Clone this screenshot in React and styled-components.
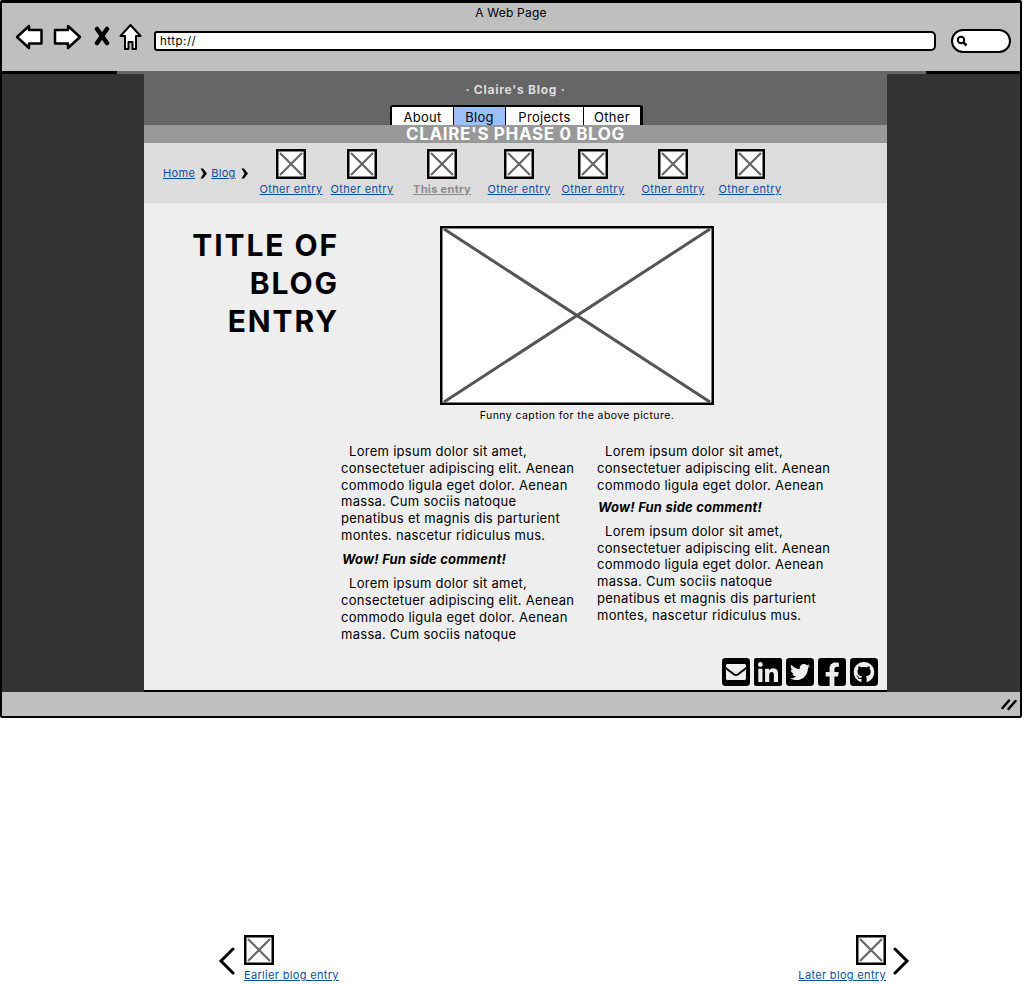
import React from 'react';
import styled, { createGlobalStyle } from 'styled-components';
import {
  FaEnvelopeSquare,
  FaLinkedin,
  FaTwitterSquare,
  FaFacebookSquare,
  FaGithubSquare,
} from 'react-icons/fa';

const GlobalStyle = createGlobalStyle`
  html, body {
    margin: 0;
    padding: 0;
    height: 985px;
    overflow: hidden;
    background: #ffffff;
    font-family: Inter, "Noto Sans", "Liberation Sans", sans-serif;
    color: #000000;
  }
`;

const Frame = styled.div`
  width: 1022px;
  height: 718px;
  box-sizing: border-box;
  border: 2px solid #000000;
  border-top-width: 3px;
  border-radius: 2px;
  display: flex;
  flex-direction: column;
`;

const Chrome = styled.header`
  height: 68px;
  background: #bfbfbf;
  display: flex;
  flex-direction: column;
  flex: none;
`;

const WindowTitle = styled.div`
  height: 20px;
  font-size: 12px;
  line-height: 20px;
  letter-spacing: 0.2px;
  text-align: center;
`;

const ToolRow = styled.div`
  display: flex;
  align-items: flex-start;
  height: 34px;
  padding-left: 13px;
`;

const NavIcon = styled.svg`
  flex: none;
  margin-right: ${(p) => p.$after}px;
  margin-top: ${(p) => p.$top}px;
`;

const AddressBar = styled.div`
  width: 782px;
  height: 20px;
  margin-top: 8px;
  box-sizing: border-box;
  border: 2px solid #000000;
  border-radius: 3px 5px 5px 3px;
  background: #ffffff;
  font-size: 11.5px;
  line-height: 16px;
  letter-spacing: 0.5px;
  padding-left: 4px;
  margin-right: 15px;
`;

const SearchPill = styled.div`
  width: 60px;
  height: 24px;
  margin-top: 6px;
  box-sizing: border-box;
  border: 2px solid #000000;
  border-radius: 12px;
  background: #ffffff;
  display: flex;
  align-items: center;
  padding-left: 3px;
`;

const Viewport = styled.div`
  flex: 1;
  min-height: 0;
  background: #333333;
  display: flex;
  flex-direction: column;
`;

const TopEdge = styled.div`
  height: 3px;
  flex: none;
  background: linear-gradient(90deg, #000 115px, #666 115px, #666 924px, #000 924px);
`;

const PageColumn = styled.main`
  width: 743px;
  margin-left: 142px;
  flex: 1;
  display: flex;
  flex-direction: column;
  min-height: 0;
`;

const SiteHeader = styled.div`
  height: 51px;
  background: #666666;
  display: flex;
  flex-direction: column;
  flex: none;
`;

const SiteName = styled.div`
  height: 31px;
  line-height: 31px;
  font-size: 12px;
  font-weight: 700;
  letter-spacing: 0.75px;
  color: #dddddd;
  text-align: center;
`;

const Tabs = styled.nav`
  display: flex;
  align-self: flex-start;
  height: 20px;
  margin-left: 246px;
  border-top: 2px solid #000000;
  border-left: 2px solid #000000;
  border-right: 3px solid #000000;
  border-radius: 3px 3px 0 0;
  box-sizing: border-box;
  overflow: hidden;
`;

const Tab = styled.div`
  width: ${(p) => p.$w}px;
  box-sizing: border-box;
  background: ${(p) => (p.$active ? '#9cc0f5' : '#ffffff')};
  font-size: 13px;
  line-height: 20px;
  letter-spacing: 0.3px;
  text-align: center;
  border-left: ${(p) => (p.$first ? 'none' : '1px solid #000')};
`;

const Band = styled.div`
  height: 18px;
  background: #999999;
  color: #ffffff;
  font-size: 17px;
  font-weight: 700;
  line-height: 18px;
  letter-spacing: 0.65px;
  text-align: center;
  overflow: hidden;
  flex: none;
`;

const CrumbBar = styled.div`
  height: 60px;
  background: #dcdcdc;
  display: flex;
  align-items: flex-start;
  padding-left: 19px;
  box-sizing: border-box;
  flex: none;
`;

const Crumbs = styled.div`
  display: flex;
  align-items: center;
  height: 60px;
  width: 96px;
  flex: none;
`;

const TextLink = styled.a`
  color: #0b4f9e;
  font-size: 11px;
  line-height: 14px;
  letter-spacing: 0.33px;
  text-decoration: underline;
  white-space: nowrap;
`;

const CrumbArrow = styled.svg`
  margin: 0 4px 0 5px;
  flex: none;
`;

const Entry = styled.div`
  width: ${(p) => p.$w}px;
  margin-left: ${(p) => p.$gap}px;
  padding-top: 6px;
  display: flex;
  flex-direction: column;
  align-items: center;
  flex: none;
`;

const Thumb = styled.svg`
  display: block;
  flex: none;
`;

const EntryLabel = styled(TextLink)`
  margin-top: 3px;
  font-weight: ${(p) => (p.$current ? 700 : 400)};
  color: ${(p) => (p.$current ? '#8a8a8a' : '#0b4f9e')};
`;

const Content = styled.div`
  flex: 1;
  min-height: 0;
  background: #eeeeee;
  border-bottom: 2px solid #000000;
  display: grid;
  grid-template-columns: 197px 1fr;
`;

const PostTitle = styled.h1`
  margin: 23px 0 0;
  padding-right: 2px;
  text-align: right;
  font-size: 30px;
  line-height: 38px;
  font-weight: 700;
  letter-spacing: 1.9px;
`;

const PostBody = styled.div`
  position: relative;
  padding-top: 23px;
`;

const Figure = styled.figure`
  margin: 0 0 0 99px;
  width: 274px;
`;

const Photo = styled.svg`
  display: block;
`;

const Caption = styled.figcaption`
  font-size: 10.5px;
  line-height: 14px;
  letter-spacing: 0.42px;
  margin-top: 4px;
  text-align: center;
  white-space: nowrap;
`;

const Columns = styled.div`
  display: grid;
  grid-template-columns: 240px 240px;
  column-gap: 16px;
  margin-top: 20px;
`;

const Para = styled.p`
  margin: 0;
  font-size: 13px;
  line-height: 16.8px;
  letter-spacing: 0.28px;
  white-space: nowrap;
`;

const Indent = styled.span`
  display: inline-block;
  width: 8px;
`;

const Aside = styled.p`
  margin: ${(p) => p.$top}px 0 7px;
  padding-left: 1px;
  font-size: 13px;
  line-height: 17px;
  letter-spacing: 0.2px;
  font-weight: 700;
  font-style: italic;
  white-space: nowrap;
`;

const Social = styled.div`
  position: absolute;
  right: 9px;
  bottom: 4px;
  display: flex;
  gap: 4px;
`;

const SocialIcon = styled.span`
  width: 28px;
  height: 28px;
  display: block;
  svg {
    display: block;
    width: 28px;
    height: 28px;
  }
`;

const StatusBar = styled.footer`
  height: 24px;
  flex: none;
  background: #bfbfbf;
  display: flex;
  justify-content: flex-end;
  align-items: center;
  padding-right: 3px;
`;

const PagerRow = styled.div`
  display: flex;
  justify-content: space-between;
  padding: 217px 114px 0 218px;
`;

const Pager = styled.div`
  display: flex;
  align-items: flex-end;
  gap: ${(p) => p.$gap}px;
`;

const PagerStack = styled.div`
  display: flex;
  flex-direction: column;
  align-items: ${(p) => (p.$right ? 'flex-end' : 'flex-start')};
  gap: 3px;
`;

const Chevron = styled.svg`
  display: block;
  margin-bottom: 7px;
`;

function Placeholder() {
  return (
    <Thumb width="30" height="30" viewBox="0 0 30 30">
      <rect x="1.25" y="1.25" width="27.5" height="27.5" fill="#fff" stroke="#000" strokeWidth="2.5" />
      <path d="M4 4 L26 26 M26 4 L4 26" stroke="#666" strokeWidth="2.2" fill="none" />
    </Thumb>
  );
}

function Arrow() {
  return (
    <CrumbArrow width="7" height="11" viewBox="0 0 7 11">
      <path d="M0.5 0.5 L3 0.5 L7 5.5 L3 10.5 L0.5 10.5 L3.5 5.5 Z" fill="#000" />
    </CrumbArrow>
  );
}

const entries = [
  { w: 64, gap: 0, label: 'Other entry' },
  { w: 64, gap: 7, label: 'Other entry' },
  { w: 58, gap: 19, label: 'This entry', current: true },
  { w: 64, gap: 16, label: 'Other entry' },
  { w: 64, gap: 10, label: 'Other entry' },
  { w: 64, gap: 16, label: 'Other entry' },
  { w: 64, gap: 13, label: 'Other entry' },
];

const tabs = [
  { w: 61, label: 'About', first: true },
  { w: 52, label: 'Blog', active: true },
  { w: 78, label: 'Projects' },
  { w: 57, label: 'Other' },
];

const socials = [FaEnvelopeSquare, FaLinkedin, FaTwitterSquare, FaFacebookSquare, FaGithubSquare];

export default function App() {
  return (
    <>
      <GlobalStyle />
      <Frame>
        <Chrome>
          <WindowTitle>A Web Page</WindowTitle>
          <ToolRow>
            <NavIcon $after={10} $top={1} width="28" height="26" viewBox="0 0 28 26">
              <path d="M2 13 L14 2 L14 6 L26.5 6 L26.5 19.5 L14 19.5 L14 24 Z" fill="#fff" stroke="#000" strokeWidth="2.5" strokeLinejoin="round" />
            </NavIcon>
            <NavIcon $after={11} $top={1} width="29" height="26" viewBox="0 0 29 26">
              <path d="M27 13 L15 2 L15 6 L2 6 L2 19.5 L15 19.5 L15 24 Z" fill="#fff" stroke="#000" strokeWidth="2.5" strokeLinejoin="round" />
            </NavIcon>
            <NavIcon $after={8} $top={3} width="18" height="20" viewBox="0 0 18 20">
              <path d="M4 3 L14 17 M14 3 L4 17" stroke="#000" strokeWidth="4.5" strokeLinecap="round" fill="none" />
            </NavIcon>
            <NavIcon $after={12} $top={0} width="23" height="28" viewBox="0 0 23 28">
              <path d="M11.5 2 L21.5 13 L17 13 L17 26 L13.5 26 L13.5 19 L9.5 19 L9.5 26 L6 26 L6 13 L1.5 13 Z" fill="#fff" stroke="#000" strokeWidth="2" strokeLinejoin="round" />
            </NavIcon>
            <AddressBar>http://</AddressBar>
            <SearchPill>
              <svg width="12" height="12" viewBox="0 0 12 12">
                <circle cx="5" cy="5" r="3.2" fill="none" stroke="#000" strokeWidth="2" />
                <path d="M7.5 7.5 L10.5 10.5" stroke="#000" strokeWidth="2.5" />
              </svg>
            </SearchPill>
          </ToolRow>
        </Chrome>
        <Viewport>
          <TopEdge />
          <PageColumn>
            <SiteHeader>
              <SiteName>· Claire's Blog ·</SiteName>
              <Tabs>
                {tabs.map((t) => (
                  <Tab key={t.label} $w={t.w} $active={t.active} $first={t.first}>
                    {t.label}
                  </Tab>
                ))}
              </Tabs>
            </SiteHeader>
            <Band>CLAIRE'S PHASE 0 BLOG</Band>
            <CrumbBar>
              <Crumbs>
                <TextLink href="#">Home</TextLink>
                <Arrow />
                <TextLink href="#">Blog</TextLink>
                <Arrow />
              </Crumbs>
              {entries.map((e, i) => (
                <Entry key={i} $w={e.w} $gap={e.gap}>
                  <Placeholder />
                  <EntryLabel href="#" $current={e.current}>{e.label}</EntryLabel>
                </Entry>
              ))}
            </CrumbBar>
            <Content>
              <PostTitle>
                TITLE OF<br />BLOG<br />ENTRY
              </PostTitle>
              <PostBody>
                <Figure>
                  <Photo width="274" height="179" viewBox="0 0 274 179">
                    <rect x="1.25" y="1.25" width="271.5" height="176.5" fill="#fff" stroke="#000" strokeWidth="2.5" />
                    <path d="M4 3 L270 176 M270 3 L4 176" stroke="#555" strokeWidth="3" fill="none" />
                  </Photo>
                  <Caption>Funny caption for the above picture.</Caption>
                </Figure>
                <Columns>
                  <div>
                    <Para>
                      <Indent />Lorem ipsum dolor sit amet,<br />
                      consectetuer adipiscing elit. Aenean<br />
                      commodo ligula eget dolor. Aenean<br />
                      massa. Cum sociis natoque<br />
                      penatibus et magnis dis parturient<br />
                      montes. nascetur ridiculus mus.
                    </Para>
                    <Aside $top={7.4}>Wow! Fun side comment!</Aside>
                    <Para>
                      <Indent />Lorem ipsum dolor sit amet,<br />
                      consectetuer adipiscing elit. Aenean<br />
                      commodo ligula eget dolor. Aenean<br />
                      massa. Cum sociis natoque
                    </Para>
                  </div>
                  <div>
                    <Para>
                      <Indent />Lorem ipsum dolor sit amet,<br />
                      consectetuer adipiscing elit. Aenean<br />
                      commodo ligula eget dolor. Aenean
                    </Para>
                    <Aside $top={5.4}>Wow! Fun side comment!</Aside>
                    <Para>
                      <Indent />Lorem ipsum dolor sit amet,<br />
                      consectetuer adipiscing elit. Aenean<br />
                      commodo ligula eget dolor. Aenean<br />
                      massa. Cum sociis natoque<br />
                      penatibus et magnis dis parturient<br />
                      montes, nascetur ridiculus mus.
                    </Para>
                  </div>
                </Columns>
                <Social>
                  {socials.map((Icon, i) => (
                    <SocialIcon key={i}>
                      <Icon viewBox="0 32 448 448" />
                    </SocialIcon>
                  ))}
                </Social>
              </PostBody>
            </Content>
          </PageColumn>
        </Viewport>
        <StatusBar>
          <svg width="16" height="14" viewBox="0 0 16 14">
            <path d="M1.5 11 L8 3.5 M7.5 12 L14.5 4" stroke="#000" strokeWidth="2.5" strokeLinecap="round" fill="none" />
          </svg>
        </StatusBar>
      </Frame>
      <PagerRow>
        <Pager $gap={9}>
          <Chevron width="17" height="28" viewBox="0 0 17 28">
            <path d="M15 2 L3 14 L15 26" stroke="#000" strokeWidth="3" fill="none" strokeLinecap="round" />
          </Chevron>
          <PagerStack>
            <Placeholder />
            <TextLink href="#">Earlier blog entry</TextLink>
          </PagerStack>
        </Pager>
        <Pager $gap={7}>
          <PagerStack $right>
            <Placeholder />
            <TextLink href="#">Later blog entry</TextLink>
          </PagerStack>
          <Chevron width="17" height="28" viewBox="0 0 17 28">
            <path d="M2 2 L14 14 L2 26" stroke="#000" strokeWidth="3" fill="none" strokeLinecap="round" />
          </Chevron>
        </Pager>
      </PagerRow>
    </>
  );
}
